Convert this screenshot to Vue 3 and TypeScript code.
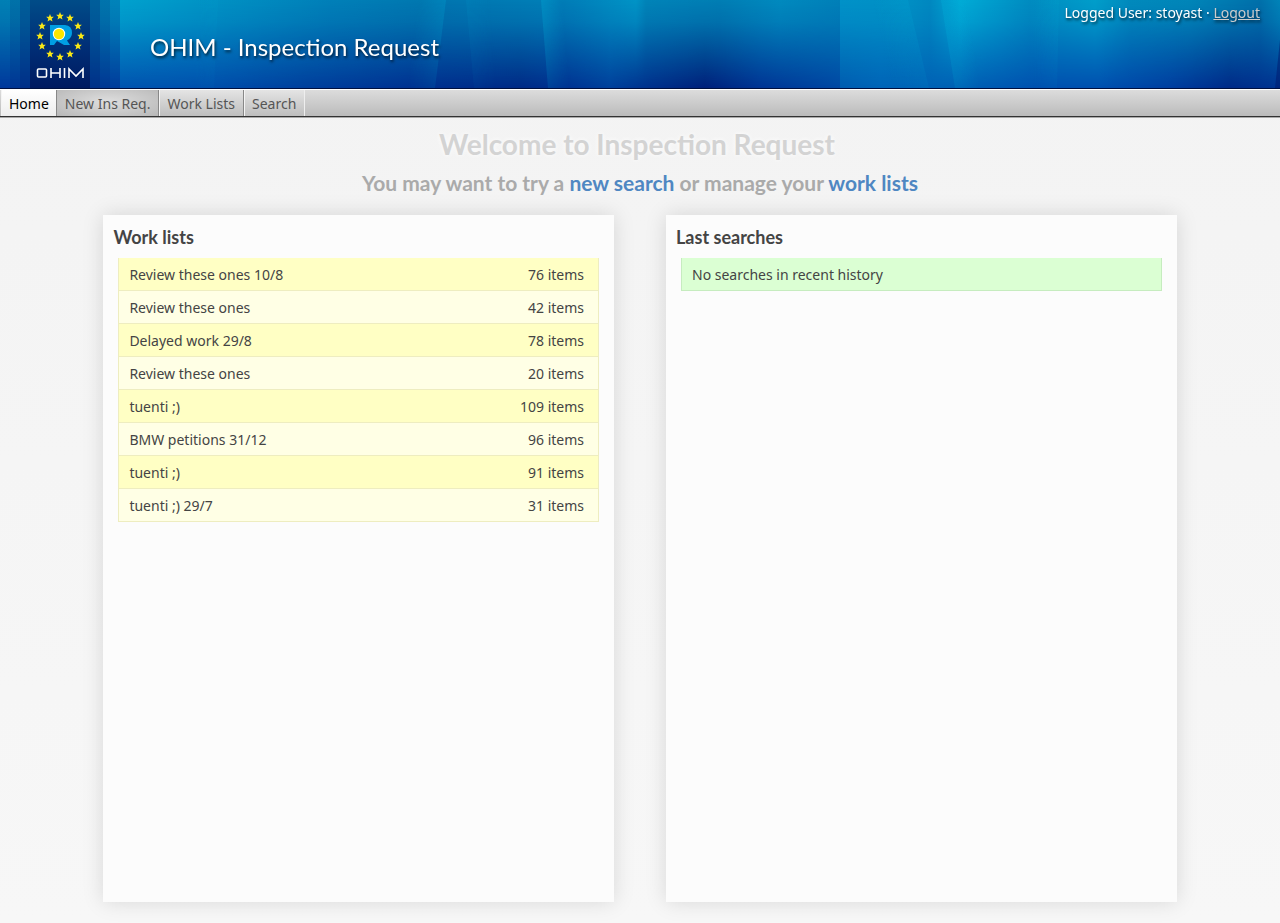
<script setup lang="ts">
interface WorkList {
  name: string
  count: number
}
interface Stop {
  x: number
  color: string
}
interface Ray {
  x: number
  width: number
  lean: number
  fill: string
  opacity: number
}

const tabs: string[] = ['Home', 'New Ins Req.', 'Work Lists', 'Search']
const activeTab = 'Home'

const workLists: WorkList[] = [
  { name: 'Review these ones 10/8', count: 76 },
  { name: 'Review these ones', count: 42 },
  { name: 'Delayed work 29/8', count: 78 },
  { name: 'Review these ones', count: 20 },
  { name: 'tuenti ;)', count: 109 },
  { name: 'BMW petitions 31/12', count: 96 },
  { name: 'tuenti ;)', count: 91 },
  { name: 'tuenti ;) 29/7', count: 31 },
]

const upper: Stop[] = [
  { x: 0, color: '#0080b4' },
  { x: 120, color: '#0084ba' },
  { x: 120, color: '#00a2ce' },
  { x: 190, color: '#0096c6' },
  { x: 250, color: '#008cc0' },
  { x: 330, color: '#0080b8' },
  { x: 420, color: '#0078b0' },
  { x: 446, color: '#0076b0' },
  { x: 540, color: '#007eb6' },
  { x: 560, color: '#007cb6' },
  { x: 600, color: '#0088be' },
  { x: 636, color: '#0094c6' },
  { x: 646, color: '#0084b8' },
  { x: 720, color: '#007eb4' },
  { x: 780, color: '#008abe' },
  { x: 840, color: '#0080b8' },
  { x: 840, color: '#0092c8' },
  { x: 905, color: '#0090c4' },
  { x: 930, color: '#0088c0' },
  { x: 960, color: '#00acd6' },
  { x: 985, color: '#00a0ce' },
  { x: 1030, color: '#008cc0' },
  { x: 1060, color: '#0094c4' },
  { x: 1095, color: '#009eca' },
  { x: 1130, color: '#008abc' },
  { x: 1190, color: '#0086b8' },
  { x: 1260, color: '#0070aa' },
  { x: 1280, color: '#0084b8' },
]
const lower: Stop[] = [
  { x: 0, color: '#00389c' },
  { x: 120, color: '#003c9c' },
  { x: 120, color: '#0054b0' },
  { x: 200, color: '#0050ae' },
  { x: 300, color: '#00409e' },
  { x: 420, color: '#003090' },
  { x: 520, color: '#002a86' },
  { x: 560, color: '#003090' },
  { x: 610, color: '#00409c' },
  { x: 650, color: '#00308c' },
  { x: 705, color: '#00207a' },
  { x: 760, color: '#003494' },
  { x: 840, color: '#0048a4' },
  { x: 840, color: '#005cb0' },
  { x: 880, color: '#0064b8' },
  { x: 960, color: '#0060b4' },
  { x: 1040, color: '#0050b0' },
  { x: 1100, color: '#0050b0' },
  { x: 1170, color: '#003ea0' },
  { x: 1230, color: '#002a88' },
  { x: 1280, color: '#003492' },
]
const rays: Ray[] = [
  { x: 418, width: 28, lean: -11, fill: 'url(#ray)', opacity: 0.6 },
  { x: 466, width: 24, lean: 8, fill: 'url(#rayBack)', opacity: 0.25 },
  { x: 541, width: 22, lean: 7, fill: 'url(#rayBack)', opacity: 0.8 },
  { x: 196, width: 22, lean: -4, fill: 'url(#ray)', opacity: 0.2 },
  { x: 872, width: 36, lean: 21, fill: 'url(#ray)', opacity: 0.45 },
  { x: 941, width: 26, lean: 14, fill: 'url(#rayBack)', opacity: 0.8 },
  { x: 1034, width: 25, lean: -2, fill: 'url(#ray)', opacity: 0.3 },
]
const leanAngle = (lean: number): number => (Math.atan(lean / 88) * 180) / Math.PI

const shades = [
  { x: 10, width: 100, opacity: 0.15 },
  { x: 20, width: 80, opacity: 0.25 },
]

const stars = Array.from({ length: 12 }, (_, i) => {
  const angle = (i * Math.PI) / 6
  return {
    x: Math.round(30 + 20.5 * Math.sin(angle)),
    y: Math.round(36 - 20.5 * Math.cos(angle)),
  }
})
</script>

<template>
  <div class="page">
    <header class="banner">
      <svg class="backdrop" viewBox="0 0 1280 88" preserveAspectRatio="none" aria-hidden="true">
        <defs>
          <linearGradient id="upper">
            <stop v-for="(s, i) in upper" :key="i" :offset="s.x / 1280" :stop-color="s.color" />
          </linearGradient>
          <linearGradient id="lower">
            <stop v-for="(s, i) in lower" :key="i" :offset="s.x / 1280" :stop-color="s.color" />
          </linearGradient>
          <linearGradient id="fade" x2="0" y2="1">
            <stop offset="0" stop-color="#fff" />
            <stop offset="0.25" stop-color="#d8d8d8" />
            <stop offset="1" stop-color="#000" />
          </linearGradient>
          <linearGradient id="ray">
            <stop offset="0" stop-color="#00b0dc" stop-opacity="0" />
            <stop offset="1" stop-color="#00b0dc" stop-opacity="0.4" />
          </linearGradient>
          <linearGradient id="rayBack">
            <stop offset="0" stop-color="#00b0dc" stop-opacity="0.4" />
            <stop offset="1" stop-color="#00b0dc" stop-opacity="0" />
          </linearGradient>
          <linearGradient id="dim" x2="0" y2="1">
            <stop offset="0" stop-color="#fff" />
            <stop offset="1" stop-color="#777" />
          </linearGradient>
          <mask id="fadeMask"><rect width="1280" height="88" fill="url(#fade)" /></mask>
          <mask id="dimMask" maskUnits="userSpaceOnUse" x="0" y="0" width="1280" height="88">
            <rect width="1280" height="88" fill="url(#dim)" />
          </mask>
        </defs>
        <rect width="1280" height="88" fill="url(#lower)" />
        <rect width="1280" height="88" fill="url(#upper)" mask="url(#fadeMask)" />
        <g mask="url(#dimMask)">
          <rect
            v-for="r in rays"
            :key="r.x"
            :transform="`translate(${r.x}) skewX(${leanAngle(r.lean)})`"
            :width="r.width"
            height="88"
            :fill="r.fill"
            :opacity="r.opacity"
          />
        </g>
        <path d="M1280 40V88H1275Z" fill="#00186c" opacity="0.5" />
      </svg>
      <svg class="logo" viewBox="0 0 120 88" role="img" aria-label="OHIM">
        <defs>
          <linearGradient id="plate" x2="0" y2="1">
            <stop offset="0" stop-color="#004c88" />
            <stop offset="0.5" stop-color="#003078" />
            <stop offset="1" stop-color="#001a60" />
          </linearGradient>
        </defs>
        <rect v-for="s in shades" :key="s.x" :x="s.x" :width="s.width" height="88" fill="#002068" :opacity="s.opacity" />
        <rect x="30" width="60" height="88" fill="url(#plate)" />
        <g transform="translate(30)">
          <path
            v-for="(s, i) in stars"
            :key="i"
            :transform="`translate(${s.x} ${s.y})`"
            d="M0-4 1.100-1.200 3.800-1.200 1.700 .7 2.500 3.500 0 1.900-2.500 3.500-1.700 .7-3.800-1.200-1.100-1.200Z"
            fill="#f9e816"
          />
          <path d="M20 25H35Q42 25.500 42 33Q42 38 37 40.500L40 45H34L27 41L24 45H20Z" fill="#009fe3" />
          <circle cx="29" cy="34" r="6.200" fill="#fff" />
          <circle cx="29" cy="34" r="5.200" fill="#f9e600" />
          <g fill="none" stroke="#fff" stroke-width="1.600">
            <rect x="7.500" y="69" width="9" height="8" rx="1" />
            <path d="M21 68V78M30 68V78M21 73H30M34.500 68V78M39 78V69L46 76L53 69V78" />
          </g>
        </g>
      </svg>
      <h1 class="title">OHIM - Inspection Request</h1>
      <p class="user">Logged User: stoyast · <a href="#logout">Logout</a></p>
    </header>

    <nav class="tabs" aria-label="Main">
      <a v-for="tab in tabs" :key="tab" href="#" class="tab" :class="{ active: tab === activeTab }">{{ tab }}</a>
    </nav>

    <main class="content">
      <h2 class="welcome">Welcome to Inspection Request</h2>
      <p class="hint">
        You may want to try a <a href="#search">new search</a> or manage your <a href="#lists">work lists</a>
      </p>
      <div class="columns">
        <section class="panel">
          <h3>Work lists</h3>
          <ul class="rows">
            <li v-for="(list, i) in workLists" :key="i" class="row">
              <span>{{ list.name }}</span><span>{{ list.count }} items</span>
            </li>
          </ul>
        </section>
        <section class="panel">
          <h3>Last searches</h3>
          <ul class="rows">
            <li class="row empty">No searches in recent history</li>
          </ul>
        </section>
      </div>
    </main>
  </div>
</template>

<style>
body {
  margin: 0;
  background: #f7f7f7;
}
</style>

<style scoped>
.page {
  display: flex;
  flex-direction: column;
  box-sizing: border-box;
  min-height: 100vh;
  font: 14px/20px "Noto Sans", Calibri, sans-serif;
  color: #444;
  background: linear-gradient(#f3f3f3, #f7f7f7);
}
h1, h2, h3, p, ul {
  margin: 0;
  padding: 0;
}
.banner {
  position: relative;
  display: flex;
  align-items: center;
  height: 88px;
  border-bottom: 1px solid #001040;
  color: #fff;
  text-shadow: 1px 2px 3px rgba(0, 0, 0, 0.7);
}
.backdrop {
  position: absolute;
  inset: 0;
  width: 100%;
  height: 100%;
}
.logo {
  position: relative;
  flex: none;
  width: 120px;
  height: 88px;
}
.title {
  position: relative;
  margin: 6px 0 0 30px;
  font: 400 24px/32px Lato, sans-serif;
}
.user {
  position: relative;
  align-self: flex-start;
  margin: 3px 20px 0 auto;
}
.user a {
  color: #ccc;
}
.tabs {
  display: flex;
  height: 26px;
  padding-left: 1px;
  border-top: 1px solid #fff;
  border-bottom: 1px solid #333;
  box-shadow: 0 1px #aaa;
  background: linear-gradient(#dcdcdc, #bbb);
}
.tab {
  padding: 0 8px;
  border-right: 1px solid #888;
  line-height: 27px;
  color: #555;
  text-decoration: none;
  background: linear-gradient(#e4e4e4, #bebebe);
  box-shadow: inset 1px 0 #f4f4f4;
}
.tab:nth-child(2) {
  background: radial-gradient(ellipse at 50% 45%, #dedede, #b8b8b8);
  box-shadow: none;
}
.tab:last-child {
  border-color: #eee;
}
.tab.active {
  padding-right: 7px;
  color: #000;
  background: linear-gradient(#fff, #eee);
}
.content {
  display: flex;
  flex: 1;
  flex-direction: column;
  margin: 0 1px;
  padding: 10px 8% 21px;
  text-align: center;
}
.welcome {
  margin-right: 6px;
  font: 700 28px/34px Lato, sans-serif;
  color: #d3d3d3;
  text-shadow: 0 0 5px #fff;
}
.hint {
  margin-top: 8px;
  font: 700 21px/28px Lato, sans-serif;
  color: #aaa;
}
.hint a {
  color: #4f87c2;
  text-decoration: none;
}
.columns {
  display: flex;
  flex: 1;
  gap: 52px;
  margin-top: 18px;
  text-align: left;
}
.panel {
  flex: 1;
  padding: 10px 15px;
  background: #fcfcfc;
  box-shadow: 0 0 20px rgba(0, 0, 0, 0.13);
}
.panel h3 {
  margin-left: -5px;
  font: 700 18px/24px Lato, sans-serif;
}
.rows {
  margin-top: 9px;
  list-style: none;
}
.row {
  display: flex;
  justify-content: space-between;
  padding: 7px 14px 5px 10px;
  border: 1px solid #eeedc0;
  border-top-width: 0;
  background: #ffffe5;
}
.row:nth-child(odd) {
  background: #ffffc4;
}
.row.empty {
  border-color: #c6ecbf;
  background: #dbffd3;
}
</style>
